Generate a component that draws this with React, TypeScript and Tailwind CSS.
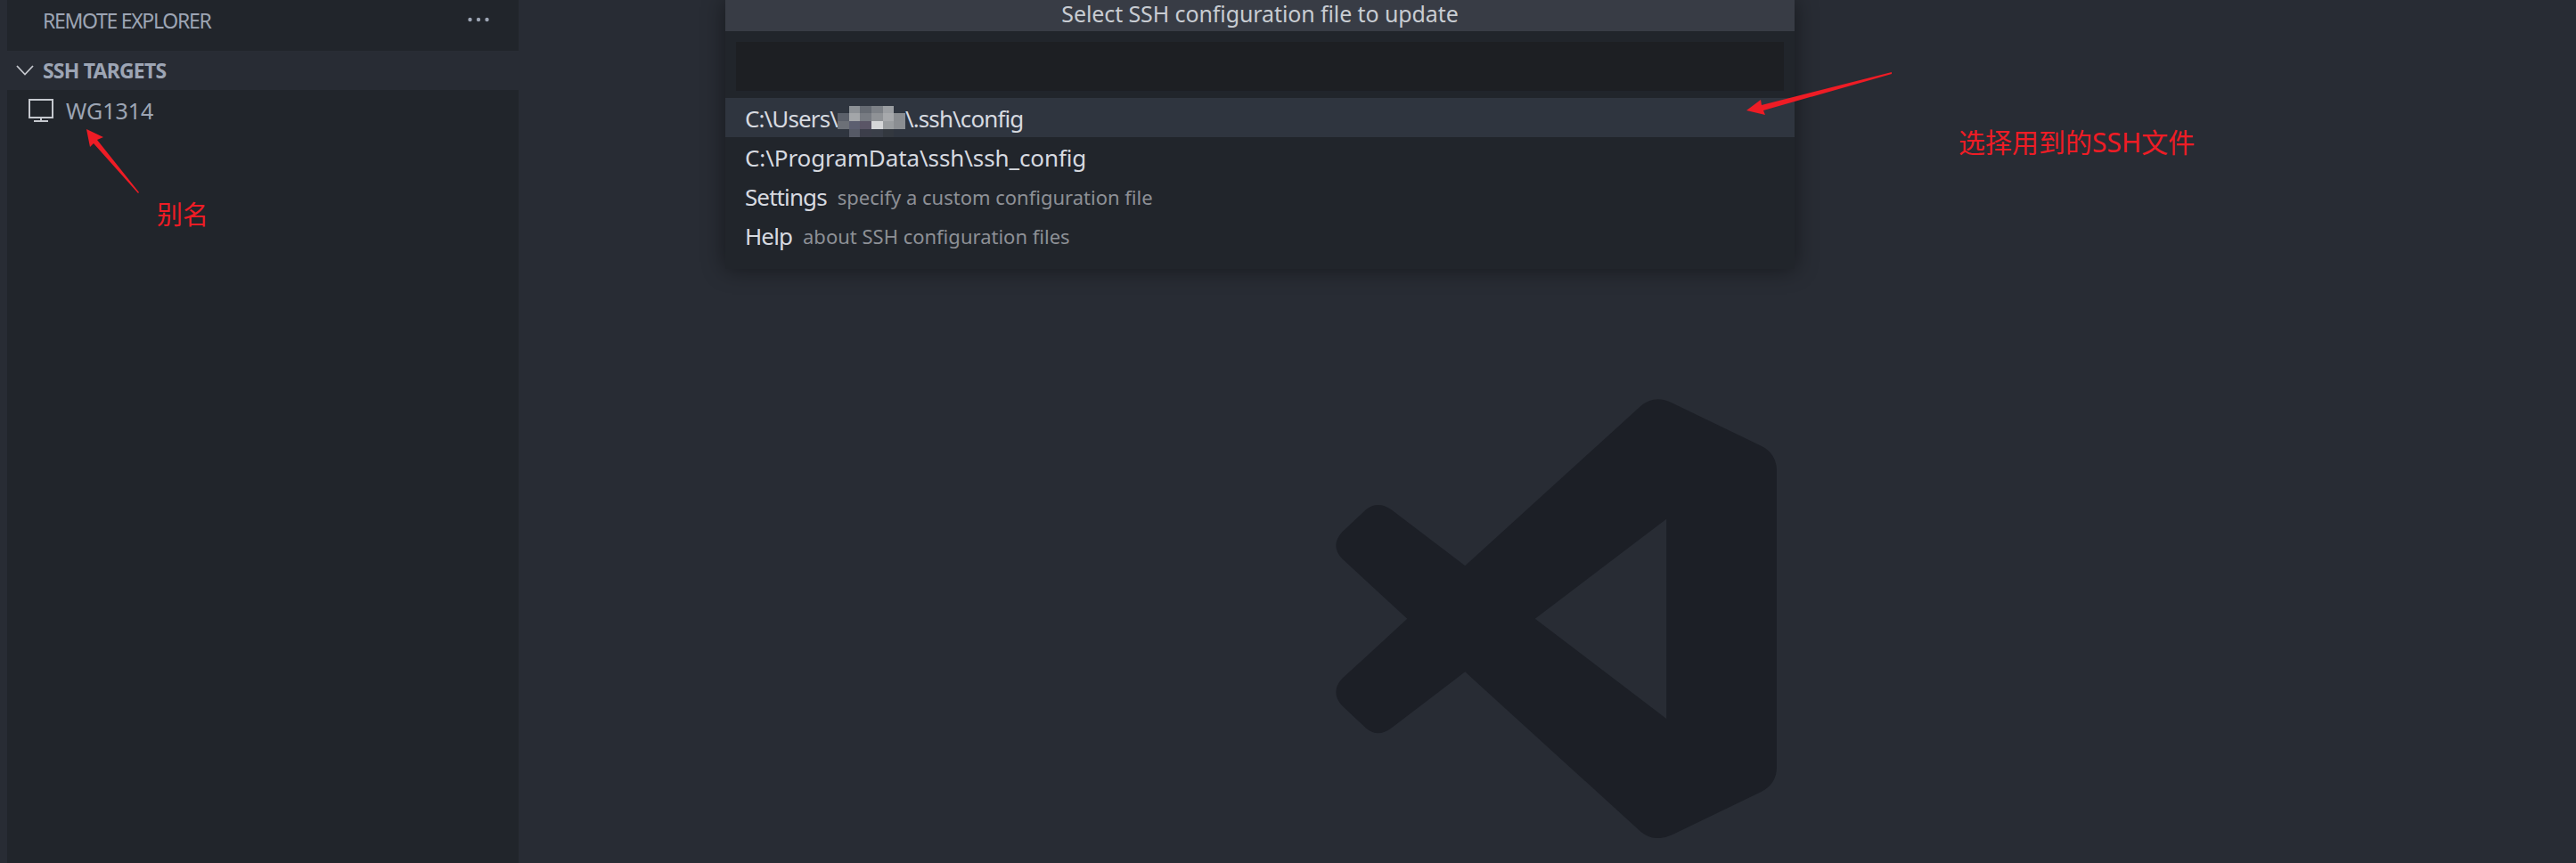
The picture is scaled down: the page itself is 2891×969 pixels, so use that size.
const mosaic = [
  ["#2f353f", "#8d9196", "#666b73", "#7d8187", "#9b9ea2", "#2f353f"],
  ["#5b606a", "#a3a6a9", "#777b82", "#8f9296", "#a7a9ac", "#8a8d91"],
  ["#6c7077", "#5c5f70", "#5a5566", "#d5d6d8", "#9a9da0", "#8b8e92"],
  ["#2f353f", "#565a66", "#3c3e4a", "#3a3f49", "#33383f", "#2f353f"],
];

function Mosaic() {
  return (
    <span className="inline-grid w-[76px] h-[35px] grid-cols-6 grid-rows-4 align-middle">
      {mosaic.flat().map((c, i) => (
        <span key={i} style={{ backgroundColor: c }} />
      ))}
    </span>
  );
}

function Row({ label, note, active, wide }: { label: React.ReactNode; note?: string; active?: boolean; wide?: boolean }) {
  return (
    <div className={`flex h-[44px] items-center pl-[22px] pt-[2px] ${active ? "bg-[#2f353f]" : ""}`}>
      <span className={`text-[26px] leading-[42px] text-[#d7dae0] whitespace-nowrap ${wide ? "tracking-[-0.1px]" : "tracking-[-0.9px]"}`}>{label}</span>
      {note && <span className="ml-3 text-[22px] text-[#8d9096] whitespace-nowrap">{note}</span>}
    </div>
  );
}

function VsLogo() {
  return (
    <svg width="495" height="493" viewBox="108 80 1387 1408" preserveAspectRatio="none">
      <path
        fill="#1c1f26"
        fillRule="evenodd"
        d="M1067 103Q1110 65 1165 92L1445 230Q1495 255 1495 310L1495 1260Q1495 1315 1445 1340L1165 1478Q1110 1503 1067 1467L515 955L283 1135Q240 1168 203 1135L128 1063Q90 1020 128 977L333 785L128 592Q90 550 128 507L203 435Q240 405 283 435L515 615ZM1148 465L735 785L1148 1105Z"
      />
    </svg>
  );
}

export default function App() {
  return (
    <div className="relative flex h-[969px] w-[2891px] overflow-hidden bg-[#282c34] font-['Noto_Sans','Noto_Sans_CJK_SC',sans-serif]">
      <div className="w-2 shrink-0" />

      <div className="w-[574px] shrink-0 bg-[#21252b]">
        <div className="flex h-[57px] items-start justify-between pl-[40px] pr-[33px] pt-[9px]">
          <span className="text-[23px] leading-[28px] tracking-[-1.3px] text-[#9da5b4]">REMOTE EXPLORER</span>
          <svg width="24" height="6" viewBox="0 0 24 6" className="mt-[10px]" fill="#9da5b4">
            <circle cx="2.5" cy="3" r="2.2" />
            <circle cx="12" cy="3" r="2.2" />
            <circle cx="21.5" cy="3" r="2.2" />
          </svg>
        </div>
        <div className="flex h-[44px] items-center bg-[#282c34] pl-[10px]">
          <svg width="20" height="12" viewBox="0 0 20 12" fill="none" stroke="#c5c8ce" strokeWidth="1.8">
            <path d="M1 1L10 10.5L19 1" />
          </svg>
          <span className="ml-[10px] text-[23px] font-bold tracking-[-0.8px] text-[#9da5b4]">SSH TARGETS</span>
        </div>
        <div className="flex items-start pl-[24px] pt-[10px]">
          <svg width="28" height="26" viewBox="0 0 28 26" fill="none" stroke="#c5c8ce" strokeWidth="2">
            <path d="M1 1H27V21H1Z" />
            <path d="M14 21V25M6 25H22" />
          </svg>
          <span className="ml-[14px] text-[25px] leading-[26px] text-[#9da5b4]">WG1314</span>
        </div>
      </div>

      <div className="flex flex-1 items-end pb-[28px] pl-[917px]">
        <VsLogo />
      </div>

      {/* quick pick */}
      <div className="absolute left-[814px] top-0 w-[1200px] h-[302px] bg-[#21252b] shadow-[0_0_24px_rgba(0,0,0,0.45)]">
        <div className="flex h-[35px] items-center justify-center bg-[#383c45] pb-[6px] text-[25px] leading-[28px] text-[#c8ccd2] tracking-[-0.1px]">
          Select SSH configuration file to update
        </div>
        <div className="mx-3 mt-[12px] h-[55px] bg-[#1d1f23]" />
        <div className="mt-[8px]">
          <Row
            active
            label={
              <>
                C:\Users\
                <Mosaic />
                \.ssh\config
              </>
            }
          />
          <Row wide label="C:\ProgramData\ssh\ssh_config" />
          <Row label="Settings" note="specify a custom configuration file" />
          <Row label="Help" note="about SSH configuration files" />
        </div>
      </div>

      {/* annotations */}
      <svg className="absolute left-0 top-0" width="2891" height="969" fill="#ee1c25">
        <path d="M97 145L116 154L109 157L156 216L155 217L105 161L101 165Z" />
        <path d="M2123 81L2123 83L1979 124L1981 129L1960 124L1976 112L1977 118Z" />
      </svg>
      <span className="absolute left-[176px] top-[226px] text-[29px] leading-[30px] text-[#ee1c25]">别名</span>
      <span className="absolute left-[2198px] top-[144px] text-[30px] leading-[32px] text-[#ee1c25] whitespace-nowrap">选择用到的SSH文件</span>
    </div>
  );
}
